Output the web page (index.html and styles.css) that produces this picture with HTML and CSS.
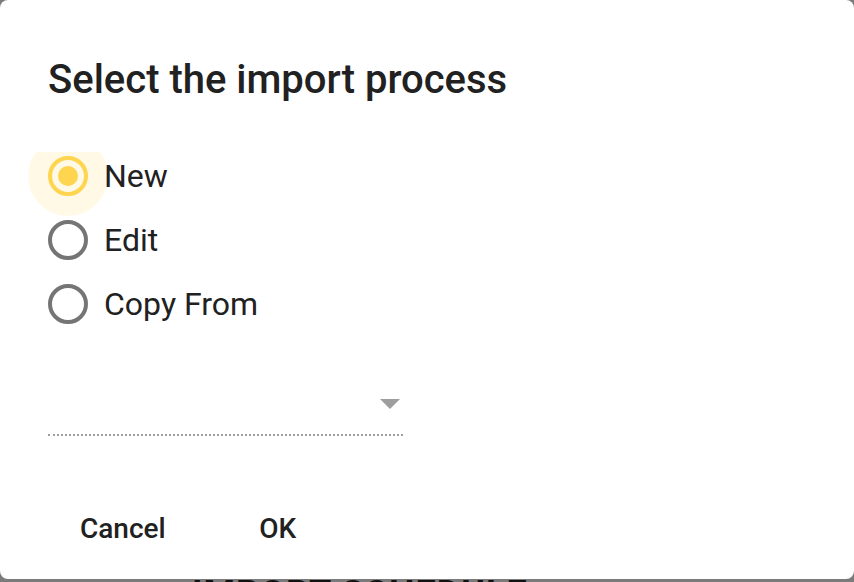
FILE: index.html
```html
<!DOCTYPE html>
<html lang="en">
<head>
    <meta charset="UTF-8">
    <meta name="viewport" content="width=device-width, initial-scale=1.0">
    <title>Select the import process</title>
    <link rel="stylesheet" href="styles.css">
</head>
<body>
    <div class="page">
        <h2 class="page-title">IMPORT SCHEDULE</h2>
    </div>

    <div class="dialog">
        <h1>Select the import process</h1>

        <div class="content">
            <form class="options">
                <label class="option checked">
                    <span class="radio"></span>
                    <span class="option-text">New</span>
                </label>
                <label class="option">
                    <span class="radio"></span>
                    <span class="option-text">Edit</span>
                </label>
                <label class="option">
                    <span class="radio"></span>
                    <span class="option-text">Copy From</span>
                </label>
            </form>

            <div class="select">
                <span class="select-arrow"></span>
            </div>
        </div>

        <div class="actions">
            <button type="button">Cancel</button>
            <button type="button">OK</button>
        </div>
    </div>
</body>
</html>
```

FILE: styles.css
```css
body {
    font-family: Roboto, "Noto Sans", sans-serif;
    background-color: #7b7b7b;
    margin: 0;
    padding: 0;
    height: 582px;
    overflow: hidden;
}
.page {
    padding: 574px 0 0 192px;
}
.page-title {
    margin: 0;
    font-size: 36px;
    line-height: 40px;
    font-weight: 700;
    color: #111;
    letter-spacing: 1px;
}
.dialog {
    position: absolute;
    z-index: 1;
    top: 0;
    left: 0;
    width: 854px;
    height: 579px;
    box-sizing: border-box;
    padding: 54px 48px 0 48px;
    background-color: #fff;
    border-radius: 8px;
    color: #212121;
}
h1 {
    margin: 0;
    font-size: 40px;
    font-weight: 500;
    line-height: 52px;
}
.content {
    margin: 46px -48px 0 -48px;
    padding: 4px 48px 0 48px;
    overflow: hidden;
}
.options {
    display: flex;
    flex-direction: column;
    gap: 24px;
}
.option {
    display: flex;
    align-items: center;
    gap: 16px;
    height: 40px;
    font-size: 32px;
    position: relative;
}
.radio {
    width: 40px;
    height: 40px;
    box-sizing: border-box;
    border: 4px solid #757575;
    border-radius: 50%;
    position: relative;
    flex-shrink: 0;
}
.option.checked .radio {
    border-color: #ffd54f;
}
.option.checked .radio::before {
    content: "";
    position: absolute;
    left: -24px;
    top: -24px;
    width: 80px;
    height: 80px;
    border-radius: 50%;
    background-color: rgba(255, 213, 79, 0.14);
    z-index: -1;
}
.option.checked .radio::after {
    content: "";
    position: absolute;
    left: 6px;
    top: 6px;
    width: 20px;
    height: 20px;
    border-radius: 50%;
    background-color: #ffd54f;
}
.select {
    margin-top: 60px;
    width: 355px;
    height: 50px;
    border-bottom: 2px dotted #9e9e9e;
    display: flex;
    justify-content: flex-end;
    align-items: center;
}
.select-arrow {
    width: 0;
    height: 0;
    border-left: 10px solid transparent;
    border-right: 10px solid transparent;
    border-top: 10px solid #9e9e9e;
    margin-right: 3px;
    margin-bottom: 10px;
}
.actions {
    margin-top: 66px;
    display: flex;
    gap: 16px;
}
button {
    font-family: Roboto, sans-serif;
    font-size: 28px;
    font-weight: 500;
    color: #212121;
    background: none;
    border: none;
    padding: 0 32px;
    min-width: 128px;
    height: 52px;
    cursor: pointer;
}
```
